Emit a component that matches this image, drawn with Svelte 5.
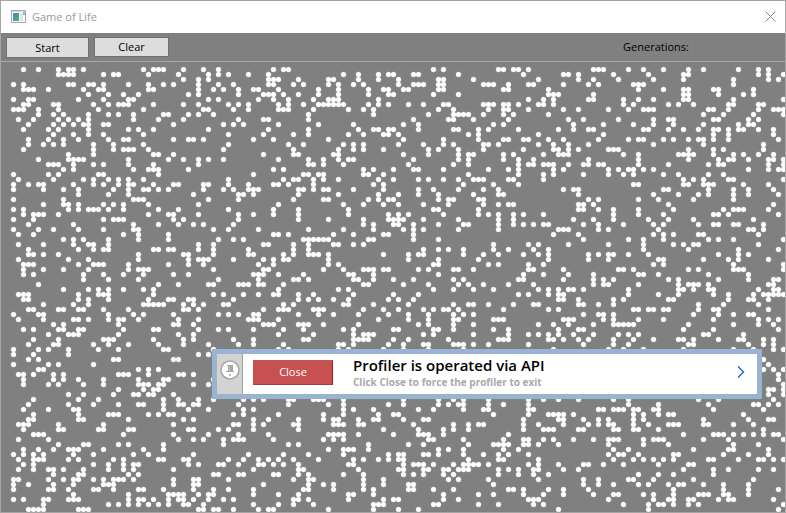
<script>
  // Living cells, one generation. Each band starts at a row and column of the
  // grid and lists, row by row, the columns that are alive.
  const bands = [
    { row: 0, col: 0, cells: `4 7 11 13 14 16 28 30 31 32 36
11 12 13 14 20 22 23 29 35
36 39
2 4 13 14 17 18 20 25 29 32 34 39
4 5 6 9 16 19 20 29 30 39
17 21 24 27 37 39
2 5 6 15 20 25 26
4 5 10 11 18 21 23 24 25 30 36 39
2 3 4 7 11 19 28
7 10 12 17 21 23 26 32 33 37 39
3 6 11 13 15 17 26 31 36
5 10 12 14 16 17 20 21 34
4 9 11 17 25 27 30
10 14 17 20 28
5 9 12 15 21 24 25 34 37 38
5 8 10 12 18 22 28
4 18 22 24 25 26 29
13 18 30 31 34
7 13 14 15 16 25 33 36 39
9 10 11 14 18 20 25 30 39
12 14 26 29 30 31 37
2 9 11 19 20 31
3 10 16 18 21 23 25 28
2 5 7 8 14 18 20 23 25 26 30 34 35
2 8 12 15 22 25 28 29 31 33
15 21 25 38
2 12 26 27 28
8 12 13 15 20 22 24 29 39` },
    { row: 0, col: 40, cells: `0 3 14 16 17
1 3 5 9 13 28 31 35 37 38
1 13 14 15 19 25 26 31 35 39
3 6 13 14 18 20 25 27 30 32 39
2 4 7 10 11 15 23 27 33 36 37
7 12 13 14 16 19 23 27 33 37 38
1 3 11 14 17 22 25 26 27 35
5 7 9 15 17 20 23 24 25 26 27 28 33 35 37
0 1 6 9 15 16 17 22 29 32 34
2 21 34
7 12 13 21
4 6 8 15 23 30
1 13 21 31 34 35 37 38
5 12 18 21 29 32 36 37 39
0 10 14 25
5 17 20 28 30 32 39
4 18 27 30 32 36
12 18 19 26 27
1 4 15 21 24 27 29 30
21 22 24 28
14 16 32 34 38
10 20 21 23 24 32 33 36
5 16 18 19 22 24 27 35 38
0 1 5 9 14 15 17 22 34 36
0 4 6 9 10 11 19 20 22 24 25 30 36
7 8 10 19 27 35 39
1 7 18 24 25 33 35 37 38
15 28 32 36 39` },
    { row: 0, col: 80, cells: `6 8 19 20 22 23 25 38 39
2 3 11 24 32 33 35
7 8 14 27 35 38
2 3 4 7 8 16 17 18 21 25 26 32 37 39
0 1 7 8 20 21 29
6 11 29 30 31 38
25 28 30 37 38
1 4 8 9 16 17 18 20 21 23 27 28 30
7 10 17 20 21 25 32 35
5 10 11 12 13 16 20 22 29
2 9 10 14 21 33 36
0 3 18 20 34
3 10 11 15 17 23 31 34 37 38
13 15 27
0 8 15 20 21 24 25 29 32 39
4 8 10 16 17 19 27 30 33 37
5 7 11 16 24 30 31 33 35
0 5 11 13 14 20 22 28 31 32 33
2 11 13 20 23 26 37
1 10 13 23 25 26 28 29 30 33 36 37 39
2 3 8 17 21 23 30 32
13 23 28 30 36
3 5 8 11 14 15 16 21 22 28
12 18 23
3 6 11 16 19 32 34 35
3 7 14 19 20 35
7 9 10 15 16 37 39
4 9 16 19 21 22 35 36 38` },
    { row: 0, col: 117, cells: `3 8 11 15 20 23 30 34 36
5 12 19 20 34 36 39
6 13 19 29 36 38
9 10 11 29
10 15 19 20 25 26 33
19 20 26 31 33
7 10 13 19 20 29 39
7 9 16 18 21 28 29 34 35
4 8 11 12 13 24 25 28 34 37 38 39
23 27 33 39
6 13 16 17 25 26 32 34
3 9 13 17 23 30 32 33
11 12 16 19 22 25 26 28 30 31 34 37
3 25 28 37
8 10 11 15 17 20 22 23 25 28 38
13 23 35
4 5 6 20 25 27 35
7 10 18 19 20 21 25 29 31 34 37
10 20 26 28 29 32 36 37 39
3 10 16 24 26 27 36 39
4 6 8 9 11 13 32 36 38 39
4 7 9 15 18 24 27
19 21 23 28 29 39
9 10 19 20 23 24 25 31 36
15 16 24 29 32 37
13 18 22 24 29 32 38
10 14 21 29
16 37` },
    { row: 28, col: 0, cells: `2 4 13 15 17 18 19 21 24 31 35 45
4 6 7 8 11 29 33 34 39 47 50
2 6 20 22 23 24 34 36 47
5 14 26 31 35 38 40 46
2 7 10 15 20 26 27 42 45 51
3 6 24 27 33
12 14 16 21 27 33 43 46 48
3 8 14 17 18 21 39 42
5 15 18 20 21 30 31 33 34 39 42 49
5 6 8 11 27 36 37 42 49 50
3 13 17 27 37 39 40 41 46
4 5 6 15 18 19 20 25 33 37 40 51
4 8 12 17 25 27 28 29 42
4 6 16 20 24 28 34 37 50 51
16 21 27 43 51
7 31 35 41 42 47 48 49 51
12 17 19 21 24 28 30
3 4 5 15 19 20 21 30 42 44 48 51
4 5 15 17 21 29 33 34 37 38 46
8 14 17 28 29 30 31 32 36 38 40 44 45
5 6 11 12 15 16 20 25 36 37 39
2 7 8 21 26 28 34 43 45 47 50 51
3 8 14 15 17 21 23 24 27 35 39 49 50 51
10 12 23 34 35 38
4 6 11 12 15 16 24 30 31 39 43 45 50
9 13 14 15 23 35 38
6 11 20 21 22 30 36 38 46 50
5 10 11 18 21 25 31 36 41 47 50
2 7 9 13 19 23 32 33 42
2 6 13 39 41
5 7 22 23 34 35
2 9 11 18
7 8 27 29 31
3 4 6 10 12 23 24 25 29 35 36 38
4 10 12 15 20 27 32 33 42
4 9 11 16 20 27 28 29 31 32 38 41
23 28 30 31
13 16 22 26 27 29 30 34
6 15 19 32 35 39 42 48 50
5 13 18 23 27 28 32 35 36 38 39 47
4 9 14 15 32 37 41 48 50
6 15 21 22 23 29 31 33 34 46 48
5 6 15 16 25 36 38 50
3 4 5 11 20 34 46 47 50
4 11 12 19 20 25 26 37 38 43 45 50
6 7 8 24 34 41 47
3 9 35 38 40 44 46 47 48
11 16 17 23 25 32 44
4 7 10 13 14 15 20 28 32
2 4 6 8 14 18 26 29 38 49
3 6 7 8 13 15 22 24 31 32 36 37 45 48 51
4 6 18 21 24 26 27 37 39 43 44 47 51
3 6 9 10 12 16 21 24 26 34 50
10 15 16 25 27 42 43 47 48
2 3 9 12 14 15 18 20 22 23 24 26 34 38 39 45
2 5 10 14 20 21 22 34 38 39
2 9 10 13 18 19 22 27 28 32 38 42 45 50
14 25 33 34 35 36 39 41 42 50
2 4 8 9 13 14 15 25 27 28 30 33 35 36 38 41 44 46
8 21 23 25 27 29 31 33 36 37 40 50
5 6 7 8 15 16 17 39 40 42 43 46 51` },
    { row: 28, col: 52, cells: `2 7 17 34 35 43
2 7 17 25 27 29 36 43 45 47 50
7 13 20 25 26 27 28 32 39 47 50
20 22 26 27 30 35 40 41 47 50
9 16 22 28 30 32 39 47
2 3 5 14 18 24 25 30
8 9 10 11 12 13 21 22 30 35
0 1 6 9 14 15 18 20 46
6 9 32 35 37 40 46 49
4 6 9 10 11 13 24 29 31 32 40 44 47
0 2 4 5 13 29 35 43
2 13 15 34 35 45 47
0 1 12 16 20 21 22 24 25 31 33 38 39 42
0 3 8 17 18 22 35
6 7 9 18 19 22 26 30 38 40 51
0 4 20 21 28 33 39 41 44 49
3 15 17 34 38 42 46
2 3 7 10 18 26 31 51
7 9 11 14 17 25 27 30
4 6 16 17 22 29 38 41 42 45 50
0 3 4 5 10 11 12 20 24 27 32 34 36 37 39 48
7 11 14 19 25 29 33 38 40 42
3 23 29 33 38 39 46 47 48
0 1 2 7 8 9 12 19 31 33 38 42
4 8 16 18 26 27 34 35 38 46 49
3 10 18 20 21 22 32 34 42 49
8 9 18 19 20 21 26 29 37 47 48 49
4 15 16 18 25 28 32 33 38 39 40 42 45
3 5 15 17 24 28 33 40









0 5 6 10 11 12 16 28 35 38 40 45
5 13 16 25 28 35 37 39 40 45 48
16 18 22 31 34 40 44 45
3 12 16 23 26 27 46
1 7 12 14 15 19 22 23 28 32 33
0 6 7 14 15 16 19 20 30 38 41 43 44
7 24 31 36 38 41
1 13 14 15 16 19 26 31 32 33 36 49
2 12 14 16 33 34 40 48
5 7 21 29 32 41 46 47 48 49
13 16 17 18 21 35 37 40 48 51
4 9 16 25 27 28 32 33 35 40 44 47 49
1 3 6 11 18 20 23 25 27 28 41 47 48
0 2 4 7 17 18 28 30 31 32 34 38 40 41 42 43 45
7 8 19 27 28 32 33 36 37 39 40 41 47 49 51
2 3 7 9 16 20 28 30 32 36 38 47 51
6 9 10 20 24 37 39 45
0 9 12 14 20 24 29 30 46
8 9 14 20 22 29 30 34 38 49 50
3 7 17 18 22 36 43 46
6 7 9 17 24 26 27 36 39
3 6 10 22 23 24 34 35 43 47
1 2 13 22 27 31` },
    { row: 28, col: 104, cells: `11 12 15 18 23 30 40 42 43 44 49
0 4 18 23 28 38 39 41 51
10 14 18 25 29 34 46
0 2 4 5 12 15 20 26 28 35 38 39 42 43 48
7 8 9 15 17 27 45 46 48
6 11 26 28 30 35 36 47
12 21 24 28 37 39 42 52
1 3 9 17 24 30 32 34 35 47
2 5 24 33 43 51
0 3 5 13 15 17 18 21 25 39 43 45
5 13 17 27 28 36 41 43 49
1 4 26 28 42 52
1 2 8 19 20 22 33 35 42 43 44 52
0 4 9 14 23 24 27 37 45
0 8 14 16 18 29 31 39 45 50 51
2 14 16 17 23 31 33 34 35 37 49 50
3 5 7 9 10 12 21 31 32 34 37 38 47 50 51
1 5 7 8 21 27 31 38 41 46 48 49 50 51 52
7 8 11 18 20 29 30 41 45 46 49
2 3 11 12 15 18 35 40 47
5 7 22 23 25 26 28 29 35 38 39 49
12 15 16 18 34 39 42 45 46
8 9 10 16 18 23 28 38 47 49 51
3 6 9 14 18 19 20 21 22 33 42 47 50
7 11 12 32 38 51
1 3 5 7 10 14 19 21 23 36 37 44
5 6 8 11 13 18 22 26 31 32 34 39 43 44 48 50
1 12 18 21 33 34 45 48 50
6 17 20 24 32 42 46 50 52

48
49
48 50 52
51
51
52
49 50 52
49 52
1 4 7 11 18 21 35 39 50
1 21 27 37 46 47 49 51
1 2 15 16 18 19 20 22 23 26 27 38 48
1 5 6 7 8 10 22 24 27 29 30 44
0 7 8 12 15 17 22 24 36 45 49 50
0 3 8 13 15 17 18 22 25 29 30 31 36 37 42 46
0 4 5 6 11 12 18 19 22 23 27 48
32 38 39 40 42 44 46 48 50 51
0 1 4 6 10 14 17 18 19 24 26 27 28 36 41 52
0 1 3 7 17 24 29 42 47
18 21 34 41 42 49
1 17 19 20 23 30 31 40 45 49
3 18 22 24 26 28 30 37 38 43 47 48 50 52
1 3 7 12 13 16 20 27 33 34
2 3 8 11 32 38 41 47 50
2 5 23 27 30 38
3 12 15 21 22 26 34 46
12 15 18 23 25 29 31 32 36 40 45
0 5 8 13 30 40 45 51
0 4 8 14 18 19 24 26 30 35 36 37 40 41 45
1 2 3 17 26 29 30 33 34 39 41 42 50
2 4 20 25 27 28 30 33 35 52
7 25 51` },
  ];

  const size = 5;
  const half = size / 2;

  // One path holds every living cell as a small disc.
  let board = $state(
    bands
      .flatMap(({ row, col, cells }) =>
        cells.split('\n').flatMap((line, r) =>
          line.split(' ').filter(Boolean).map((c) => {
            const x = (col + Number(c)) * size;
            const y = (row + r) * size + half;
            return `M${x} ${y}a${half} ${half} 0 1 0 ${size} 0a${half} ${half} 0 1 0 -${size} 0`;
          })
        )
      )
      .join('')
  );
</script>

<main class="window">
  <header class="titlebar">
    <svg class="app-icon" width="16" height="14" viewBox="0 0 16 14" aria-hidden="true">
      <defs>
        <linearGradient id="pane" x1="0" y1="0" x2="1" y2="1">
          <stop offset="0" stop-color="#4f86b8" />
          <stop offset="1" stop-color="#52b06c" />
        </linearGradient>
      </defs>
      <rect x="0.5" y="0.5" width="14" height="12" fill="#fff" stroke="#a3a8b4" />
      <path d="M1 1.5h13" stroke="#d4d9e4" />
      <rect x="2" y="3" width="6" height="8" fill="url(#pane)" />
      <rect x="9" y="3" width="3" height="8" fill="#e3e3e3" />
      <rect x="12" y="2" width="2" height="3" fill="#8fb3cf" />
    </svg>
    <h1>Game of Life</h1>
    <button class="window-close" aria-label="Close window">
      <svg width="11" height="11" viewBox="0 0 11 11"><path d="M.5.5l10 10M10.5.5l-10 10" fill="none" stroke="#888" /></svg>
    </button>
  </header>

  <div class="toolbar">
    <button class="tool start">Start</button>
    <button class="tool clear" onclick={() => (board = '')}>Clear</button>
    <span class="generations">Generations:</span>
  </div>

  <div class="board">
    <svg aria-hidden="true"><path d={board} fill="#fff" stroke="#fff" stroke-width="0.3" /></svg>
  </div>

  <section class="profiler" aria-label="Profiler">
    <div class="grip">
      <svg width="20" height="20" viewBox="0 0 20 20" aria-hidden="true">
        <circle cx="10" cy="10" r="9" fill="#fff" stroke="#a6a6a6" stroke-width="1.500" />
        <path d="M7 5h6v6h1v1H6v-1h2V6H7z" fill="#a6a6a6" />
        <path d="M9.500 6v5" stroke="#c4c4c4" />
        <path d="M10 14v2" stroke="#b5b5b5" stroke-width="2" />
      </svg>
    </div>
    <div class="content">
      <button class="force-close">Close</button>
      <div class="message">
        <strong>Profiler is operated via API</strong>
        <small>Click Close to force the profiler to exit</small>
      </div>
      <button class="expand" aria-label="Expand">
        <svg width="8" height="12" viewBox="0 0 8 12"><path d="M1 .5L6.500 6L1 11.500" fill="none" stroke="#1c73bd" stroke-width="1.500" /></svg>
      </button>
    </div>
  </section>
</main>

<style>
  :global(body) {
    margin: 0;
  }
  .window {
    position: relative;
    box-sizing: border-box;
    min-height: 100vh;
    display: flex;
    flex-direction: column;
    border: 1px solid #a5a5a5;
    background: #808080;
    color: #000;
    font: 11px/16px "Open Sans", "Noto Sans", sans-serif;
  }
  button {
    padding: 0;
    font: inherit;
    color: inherit;
  }
  svg {
    display: block;
  }
  .titlebar {
    display: flex;
    align-items: center;
    height: 32px;
    padding: 0 9px 0 10px;
    background: #fff;
  }
  h1 {
    flex: 1;
    margin: 0 0 0 5px;
    font-size: 11px;
    font-weight: 400;
    color: #999;
  }
  .window-close {
    padding-bottom: 2px;
    border: 0;
    background: none;
  }
  .toolbar {
    display: flex;
    align-items: flex-start;
    gap: 5px;
    height: 24px;
    padding: 4px 96px 0 5px;
    border-bottom: 1px solid #a9a9a9;
  }
  .tool {
    border: 1px solid #707070;
    background: #ddd;
  }
  .start {
    width: 83px;
    height: 21px;
  }
  .clear {
    width: 75px;
    height: 20px;
  }
  .generations {
    margin-left: auto;
    line-height: 20px;
  }
  .board {
    flex: 1;
    display: flex;
    padding: 5px 0 0;
    min-height: 440px;
  }
  .board svg {
    flex: 1;
    width: 100%;
  }
  .profiler {
    position: absolute;
    top: 348px;
    left: 211px;
    right: 23px;
    display: flex;
    box-sizing: border-box;
    height: 50px;
    border: 5px solid #99b4d1;
    background: #fff;
  }
  .grip {
    box-sizing: border-box;
    width: 26px;
    padding: 6px 0 0 3px;
    border-right: 1px solid #a0a0a0;
    background: #d3d3d3;
  }
  .content {
    flex: 1;
    display: flex;
    align-items: center;
    padding: 0 12px 4px 10px;
  }
  .force-close {
    width: 80px;
    height: 25px;
    margin-right: 20px;
    border: 1px solid #c75050;
    border-top-color: #b85a5a;
    border-right-color: #a01c1c;
    border-bottom-color: #a83a3a;
    background: #c75050;
    color: #fff;
  }
  .message {
    flex: 1;
    display: flex;
    flex-direction: column;
  }
  strong {
    font-size: 15px;
    font-weight: 600;
    line-height: 20px;
  }
  small {
    font-size: 10px;
    font-weight: 700;
    line-height: 14px;
    color: #a9a9a9;
  }
  .expand {
    border: 0;
    background: none;
  }
</style>
